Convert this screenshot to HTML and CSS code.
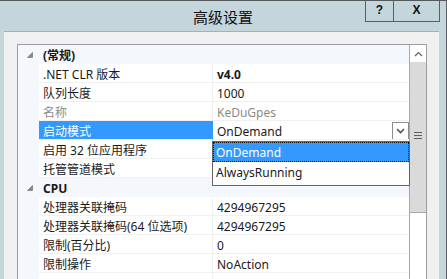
FILE: index.html
```html
<!DOCTYPE html>
<html lang="zh-CN">
<head>
  <meta charset="UTF-8" />
  <title>高级设置</title>
  <link rel="stylesheet" href="styles.css">
</head>
<body>
  <div class="window">
    <div class="behind"><span>程序</span></div>
    <div class="titlebar">
      <span class="title">高级设置</span>
      <div class="controls">
        <span class="btn help">?</span>
        <span class="btn close">X</span>
      </div>
    </div>

    <div class="panel">
      <div class="grid">
        <div class="rows">
          <div class="row cat">
            <span class="gutter"><svg width="6" height="6" viewBox="0 0 6 6"><polygon points="5.5,0.5 5.5,5.5 0.5,5.5" fill="#8a8a8a" stroke="#6a6a6a" stroke-width="0.6"/></svg></span>
            <span class="name">(常规)</span>
          </div>
          <div class="row">
            <span class="gutter"></span>
            <span class="name">.NET CLR 版本</span>
            <span class="value bold">v4.0</span>
          </div>
          <div class="row">
            <span class="gutter"></span>
            <span class="name">队列长度</span>
            <span class="value">1000</span>
          </div>
          <div class="row muted">
            <span class="gutter"></span>
            <span class="name">名称</span>
            <span class="value">KeDuGpes</span>
          </div>
          <div class="row selected">
            <span class="gutter"></span>
            <span class="name">启动模式</span>
            <span class="value">OnDemand
              <span class="dropbtn"><svg width="9" height="6" viewBox="0 0 9 6"><polyline points="1,1 4.5,4.5 8,1" fill="none" stroke="#555" stroke-width="1.6"/></svg></span>
            </span>
          </div>
          <div class="row">
            <span class="gutter"></span>
            <span class="name">启用 32 位应用程序</span>
            <span class="value"></span>
          </div>
          <div class="row">
            <span class="gutter"></span>
            <span class="name">托管管道模式</span>
            <span class="value"></span>
          </div>
          <div class="row cat">
            <span class="gutter"><svg width="6" height="6" viewBox="0 0 6 6"><polygon points="5.5,0.5 5.5,5.5 0.5,5.5" fill="#8a8a8a" stroke="#6a6a6a" stroke-width="0.6"/></svg></span>
            <span class="name">CPU</span>
          </div>
          <div class="row">
            <span class="gutter"></span>
            <span class="name">处理器关联掩码</span>
            <span class="value">4294967295</span>
          </div>
          <div class="row">
            <span class="gutter"></span>
            <span class="name">处理器关联掩码(64 位选项)</span>
            <span class="value">4294967295</span>
          </div>
          <div class="row">
            <span class="gutter"></span>
            <span class="name">限制(百分比)</span>
            <span class="value">0</span>
          </div>
          <div class="row">
            <span class="gutter"></span>
            <span class="name">限制操作</span>
            <span class="value">NoAction</span>
          </div>
          <div class="row">
            <span class="gutter"></span>
            <span class="name"></span>
            <span class="value"></span>
          </div>
        </div>

        <div class="scrollbar">
          <span class="arrow-up"><svg width="9" height="6" viewBox="0 0 9 6"><polyline points="1,5 4.5,1.5 8,5" fill="none" stroke="#606060" stroke-width="1.2"/></svg></span>
          <span class="thumb"><span class="grip"></span></span>
        </div>

        <!-- 下拉列表 -->
        <div class="dropdown">
          <div class="option active">OnDemand</div>
          <div class="option">AlwaysRunning</div>
        </div>
      </div>
    </div>
  </div>
</body>
</html>
```

FILE: styles.css
```css
body {
  margin: 0;
  background: #c4d5db;
  font-family: "Noto Sans", "Noto Sans CJK SC", sans-serif;
  font-size: 12px;
  color: #1a1a1a;
}

.window {
  width: 447px;
  height: 279px;
  overflow: hidden;
  display: flex;
  flex-direction: column;
  box-sizing: border-box;
  border-right: 1px solid #5a6066;
}

.behind {
  height: 2px;
  overflow: hidden;
  border-bottom: 1px solid #55595c;
  background: linear-gradient(to right, #ffffff 0, #ffffff 34px, #c4d5db 34px);
}

.behind span {
  display: block;
  margin-top: -9px;
  font-size: 11px;
  line-height: 12px;
  color: #3b3b8a;
}

.titlebar {
  position: relative;
  height: 30px;
  display: flex;
  align-items: center;
  justify-content: center;
  flex-shrink: 0;
}

.title {
  font-family: "Noto Sans CJK SC", sans-serif;
  font-size: 15px;
  color: #111;
  margin-top: 1px;
}

/* 帮助 / 关闭 */
.controls {
  position: absolute;
  top: -3px;
  right: 6px;
  display: flex;
  height: 24px;
  box-sizing: border-box;
  border: 1px solid #5c6064;
  border-top: none;
}

.btn {
  display: flex;
  align-items: center;
  justify-content: center;
  font-family: "Liberation Sans", sans-serif;
  font-weight: bold;
  font-size: 12px;
  color: #111;
}

.help {
  width: 27px;
  border-right: 1px solid #5c6064;
}

.close {
  width: 45px;
  font-size: 12px;
}

.panel {
  flex: 1;
  margin: 0 7px 0 4px;
  background: #f0f0f0;
  border-top: 1px solid #a9b0b3;
  padding: 12px 12px 0 13px;
}

.grid {
  position: relative;
  display: flex;
  width: 410px;
  box-sizing: border-box;
  border: 1px solid #9a9ea3;
  background: #fff;
}

.rows {
  width: 391px;
}

.row {
  display: grid;
  grid-template-columns: 21px 174px 196px;
  height: 19px;
  line-height: 18px;
}

.row > span {
  white-space: nowrap;
  overflow: hidden;
  box-sizing: border-box;
}

.gutter {
  background: #f4f7fc;
  display: flex;
  align-items: center;
  padding-left: 9px;
}

.name,
.value {
  border-bottom: 1px solid #f0f0f0;
  padding: 2px 0 0 4px;
}

.name {
  border-right: 1px solid #f0f0f0;
}

.bold {
  font-weight: bold;
}

.muted {
  color: #8a8a8a;
}

.cat {
  background: #f4f7fc;
}

.cat .name {
  grid-column: 2 / 4;
  font-weight: bold;
  border: none;
  padding-top: 2px;
}

.cat .gutter {
  padding-top: 1px;
}

.selected .name {
  background: #3399ff;
  color: #fff;
  border-right-color: #3399ff;
}

.selected .value {
  position: relative;
}

.dropbtn {
  position: absolute;
  right: 0;
  top: 1px;
  width: 17px;
  height: 18px;
  box-sizing: border-box;
  border: 1px solid #8c8c8c;
  background: #fff;
  display: flex;
  align-items: center;
  justify-content: center;
}

/* 滚动条 */
.scrollbar {
  width: 17px;
  box-sizing: border-box;
  border-left: 1px solid #a8a8a8;
  display: flex;
  flex-direction: column;
  background: #fff;
}

.arrow-up {
  height: 17px;
  display: flex;
  align-items: center;
  justify-content: center;
  background: #fff;
}

.thumb {
  height: 150px;
  background: #dadada;
  border-bottom: 1px solid #a8a8a8;
  display: flex;
  align-items: center;
  justify-content: center;
}

.grip {
  width: 8px;
  height: 7px;
  margin-top: -3px;
  background: linear-gradient(to bottom,
    #606060 0, #606060 1px, transparent 1px, transparent 3px,
    #606060 3px, #606060 4px, transparent 4px, transparent 6px,
    #606060 6px, #606060 7px);
}

.dropdown {
  position: absolute;
  left: 194px;
  top: 96px;
  width: 198px;
  height: 45px;
  box-sizing: border-box;
  border: 1px solid #646464;
  background: #fff;
}

.option {
  height: 19px;
  line-height: 19px;
  padding: 2px 0 0 3px;
  box-sizing: border-box;
  line-height: 17px;
}

.option.active {
  background: #3399ff;
  color: #fff;
  outline: 1px dotted #111;
  outline-offset: -1px;
  height: 20px;
  padding-top: 2px;
}
```
